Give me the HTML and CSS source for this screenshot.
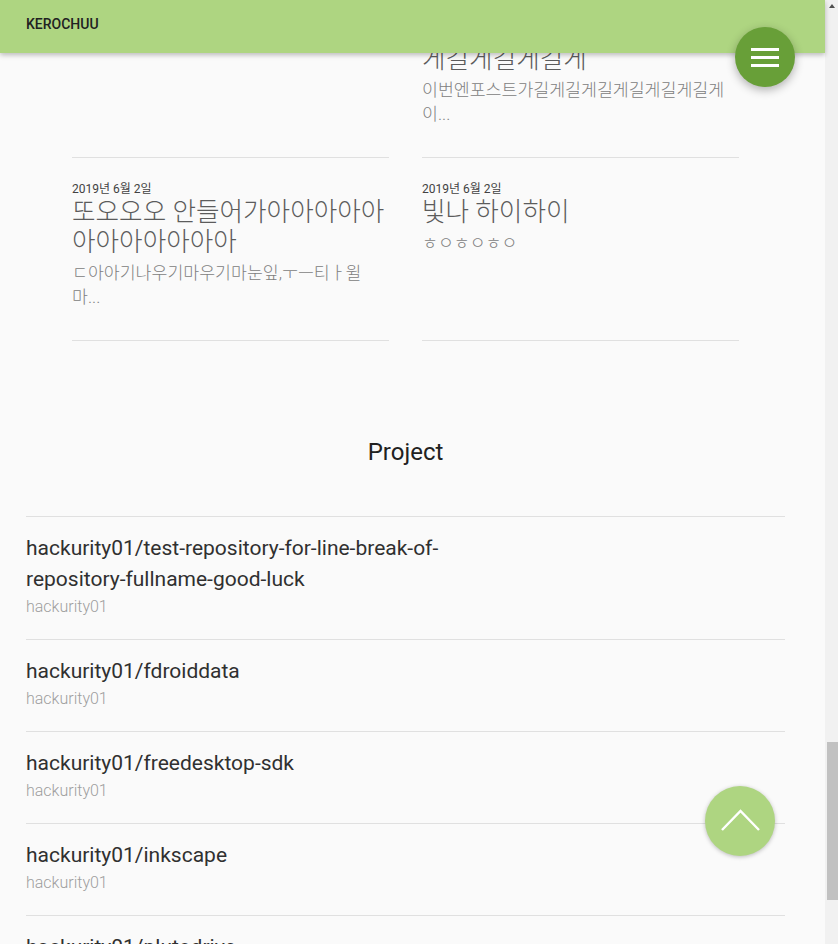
FILE: index.html
```html
<!DOCTYPE html>
<html lang="ko">
<head>
<meta charset="utf-8">
<title>KEROCHUU</title>
<link rel="stylesheet" href="styles.css">
</head>
<body>
<div class="viewport">
  <header class="appbar"><span class="brand">KEROCHUU</span></header>
  <button class="fab-menu" aria-label="menu"><span class="bar"></span><span class="bar"></span><span class="bar"></span></button>

  <div class="scroller">
    <main class="page">
      <section class="posts">
        <article class="card">
          <div class="date">2019년 6월 2일</div>
          <h3 class="title">첫번째 포스트</h3>
          <p class="excerpt">안녕하세요</p>
        </article>
        <article class="card">
          <div class="date">2019년 6월 2일</div>
          <h3 class="title">이번엔포스트가길게길게길게길게길게길게길게길게길게길게길게길게길게</h3>
          <p class="excerpt">이번엔포스트가길게길게길게길게길게길게이...</p>
        </article>
        <article class="card">
          <div class="date">2019년 6월 2일</div>
          <h3 class="title">또오오오 안들어가아아아아아아아아아아아아</h3>
          <p class="excerpt">ㄷ아아기나우기마우기마눈잎,ㅜㅡ티ㅏ윌마...</p>
        </article>
        <article class="card">
          <div class="date">2019년 6월 2일</div>
          <h3 class="title">빛나 하이하이</h3>
          <p class="excerpt">ㅎㅇㅎㅇㅎㅇ</p>
        </article>
      </section>

      <section class="projects">
        <h2 class="section-title">Project</h2>
        <ul class="repo-list">
          <li class="repo">
            <div class="repo-name">hackurity01/test-repository-for-line-break-of-repository-fullname-good-luck</div>
            <div class="repo-owner">hackurity01</div>
          </li>
          <li class="repo">
            <div class="repo-name">hackurity01/fdroiddata</div>
            <div class="repo-owner">hackurity01</div>
          </li>
          <li class="repo">
            <div class="repo-name">hackurity01/freedesktop-sdk</div>
            <div class="repo-owner">hackurity01</div>
          </li>
          <li class="repo">
            <div class="repo-name">hackurity01/inkscape</div>
            <div class="repo-owner">hackurity01</div>
          </li>
          <li class="repo">
            <div class="repo-name">hackurity01/plutodrive</div>
            <div class="repo-owner">hackurity01</div>
          </li>
        </ul>
      </section>
    </main>
  </div>

  <div class="scrollbar">
    <div class="sb-button"><span class="sb-arrow"></span></div>
    <div class="sb-track"><span class="sb-thumb"></span></div>
  </div>

  <a class="fab-top" href="#" aria-label="top">
    <svg width="70" height="70" viewBox="0 0 70 70"><polyline points="17,44 35.5,25 54,44" fill="none" stroke="#fff" stroke-width="2.4"/></svg>
  </a>
</div>
</body>
</html>
```

FILE: styles.css
```css
* { box-sizing: border-box; }

html, body {
  margin: 0;
  height: 100%;
  overflow: hidden;
}

body {
  background: #fafafa;
  font-family: Roboto, "Noto Sans CJK KR", sans-serif;
  color: rgba(0, 0, 0, 0.87);
}

.viewport {
  position: relative;
  display: flex;
  width: 838px;
  height: 944px;
  overflow: hidden;
}

/* app bar */
.appbar {
  position: absolute;
  top: 0;
  left: 0;
  width: 825px;
  height: 53px;
  background: #aed581;
  box-shadow: 0 2px 5px rgba(0, 0, 0, 0.26);
  z-index: 2;
  padding: 14px 0 0 26px;
}

.brand {
  display: block;
  font-size: 14px;
  line-height: 20px;
  font-weight: 500;
  color: #212121;
}

.fab-menu {
  position: absolute;
  left: 735px;
  top: 27px;
  width: 60px;
  height: 60px;
  border: 0;
  padding: 0;
  border-radius: 50%;
  background: #689f38;
  box-shadow: 0 3px 10px rgba(0, 0, 0, 0.3);
  z-index: 3;
  display: flex;
  flex-direction: column;
  align-items: center;
  justify-content: center;
  gap: 5px;
}

.fab-menu .bar {
  display: block;
  width: 28px;
  height: 3px;
  background: #fff;
}

/* content */
.scroller {
  flex: 0 0 825px;
  overflow: hidden;
}

.page {
  width: 811px;
}

.posts {
  display: grid;
  grid-template-columns: 317px 317px;
  column-gap: 33px;
  padding: 0 72px;
  margin-top: -55px;
}

.card {
  border-bottom: 1px solid #e0e0e0;
  padding: 23px 0 31px;
}

.date {
  font-size: 12px;
  line-height: 16px;
  color: #424242;
}

.title {
  margin: 0;
  font-size: 25.6px;
  line-height: 30px;
  font-weight: 300;
  color: #5c5c5c;
}

.excerpt {
  margin: 4px 0 0;
  font-size: 17.3px;
  line-height: 24px;
  font-weight: 300;
  color: #808080;
}

.projects {
  padding: 0 26px;
}

.section-title {
  margin: 95px 0 48px;
  font-size: 24px;
  line-height: 32px;
  font-weight: 400;
  text-align: center;
  color: #212121;
}

.repo-list {
  list-style: none;
  margin: 0;
  padding: 0;
  border-top: 1px solid #e0e0e0;
}

.repo {
  border-bottom: 1px solid #e0e0e0;
  padding: 16px 0 21px;
}

.repo-name {
  max-width: 450px;
  font-size: 21px;
  line-height: 31px;
  color: #303030;
}

.repo-owner {
  font-size: 16px;
  line-height: 23px;
  font-weight: 300;
  color: #9e9e9e;
}

/* fake scrollbar (page is scrolled) */
.scrollbar {
  flex: 0 0 13px;
  display: flex;
  flex-direction: column;
  background: #f1f1f1;
}

.sb-button {
  height: 13px;
  display: flex;
  justify-content: center;
  padding-top: 4px;
}

.sb-arrow {
  width: 0;
  height: 0;
  border-left: 3.5px solid transparent;
  border-right: 3.5px solid transparent;
  border-bottom: 4px solid #505050;
}

.sb-track {
  flex: 1;
  position: relative;
}

.sb-thumb {
  position: absolute;
  left: 2px;
  right: 0;
  top: 729px;
  height: 158px;
  background: #c1c1c1;
}

/* back to top */
.fab-top {
  position: absolute;
  left: 705px;
  top: 786px;
  width: 70px;
  height: 70px;
  border-radius: 50%;
  background: #aed581;
  box-shadow: 0 1px 4px rgba(0, 0, 0, 0.25);
  z-index: 3;
  display: block;
}

.fab-top svg { display: block; }
```
